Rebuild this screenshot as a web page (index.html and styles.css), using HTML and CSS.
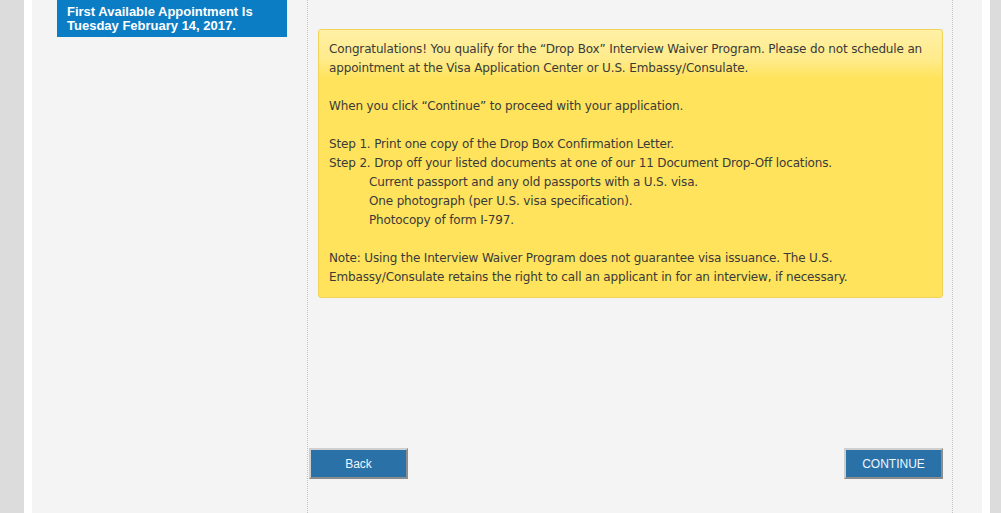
FILE: index.html
```html
<!DOCTYPE html>
<html lang="en">
<head>
    <meta charset="UTF-8">
    <title>Schedule Appointment</title>
    <link rel="stylesheet" href="styles.css">
</head>
<body>
    <div class="wrapper">
        <div class="panel">
            <div class="sidebar">
                <div class="first-appt">First Available Appointment Is<br>Tuesday February 14, 2017.</div>
            </div>
            <div class="main">
                <div class="notice">
                    <p>Congratulations! You qualify for the “Drop Box” Interview Waiver Program. Please do not schedule an appointment at the Visa Application Center or U.S. Embassy/Consulate.</p>
                    <p>When you click “Continue” to proceed with your application.</p>
                    <div class="steps">
                        Step 1. Print one copy of the Drop Box Confirmation Letter.<br>
                        Step 2. Drop off your listed documents at one of our 11 Document Drop-Off locations.
                        <ul class="docs">
                            <li>Current passport and any old passports with a U.S. visa.</li>
                            <li>One photograph (per U.S. visa specification).</li>
                            <li>Photocopy of form I-797.</li>
                        </ul>
                    </div>
                    <p>Note: Using the Interview Waiver Program does not guarantee visa issuance. The U.S. Embassy/Consulate retains the right to call an applicant in for an interview, if necessary.</p>
                </div>
                <div class="actions">
                    <button class="btn">Back</button>
                    <button class="btn">CONTINUE</button>
                </div>
            </div>
        </div>
    </div>
</body>
</html>
```

FILE: styles.css
```css
html, body {
    margin: 0;
    padding: 0;
    height: 100%;
}

body {
    background: #dcdcdc;
    font-family: "DejaVu Sans", Verdana, sans-serif;
    overflow: hidden;
}

.wrapper {
    margin-left: 24px;
    width: 950px;
    padding: 0 8px;
    background: #fff;
    height: 100%;
}

.panel {
    background: #f4f4f4;
    height: 100%;
    display: flex;
}

.sidebar {
    width: 250px;
    padding-left: 25px;
}

.first-appt {
    width: 210px;
    background: #0b7dc5;
    color: #fff;
    font-family: "Liberation Sans", Arial, sans-serif;
    font-weight: bold;
    font-size: 13px;
    line-height: 14px;
    padding: 5px 10px 4px;
}

.main {
    width: 644px;
    border-left: 1px dotted #c4c4c4;
    border-right: 1px dotted #c4c4c4;
    display: flex;
    flex-direction: column;
}

.notice {
    margin: 29px 9px 0 10px;
    padding: 10px;
    border: 1px solid #f2d35a;
    border-radius: 3px;
    background: linear-gradient(to bottom, #fff0a6 0px, #ffeb8a 30px, #ffe35c 48px, #ffe35c 100%);
    color: #3a3a3a;
    font-size: 12px;
    letter-spacing: -0.15px;
    line-height: 19px;
}

.notice p,
.steps {
    margin: 0 0 19px;
}

.notice p:last-child {
    margin-bottom: 0;
}

.docs {
    list-style: none;
    margin: 0;
    padding-left: 40px;
}

.actions {
    margin-top: 150px;
    display: flex;
    justify-content: space-between;
    padding: 0 9px 0 1px;
}

.btn {
    width: 99px;
    height: 31px;
    background: #2a71a8;
    color: #eef6ff;
    border: 2px solid;
    border-color: #cfcfcf #8c8c8c #8c8c8c #cfcfcf;
    font-family: "Liberation Sans", Arial, sans-serif;
    font-size: 12px;
    padding: 0;
    cursor: pointer;
}
```
